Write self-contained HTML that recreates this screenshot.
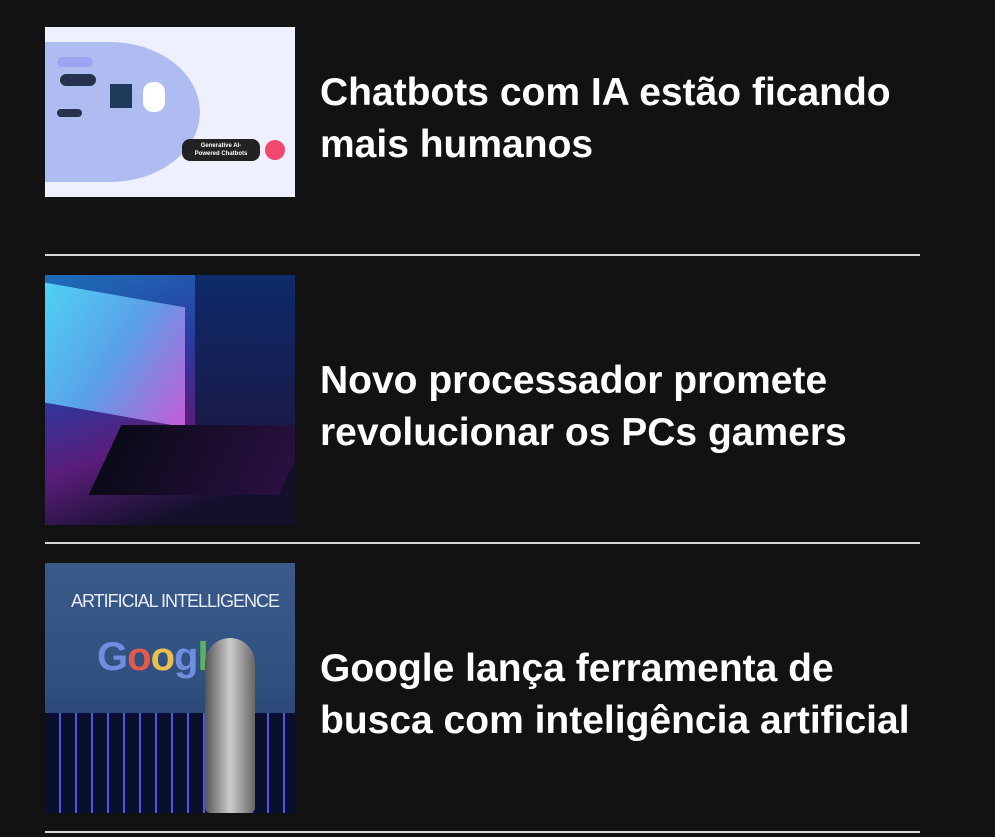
<!DOCTYPE html>
<html><head><meta charset="utf-8"><style>
html,body{margin:0;padding:0;background:#121212;width:995px;height:837px;overflow:hidden;font-family:"Liberation Sans",sans-serif}
.item{position:absolute;left:45px;width:875px}
.img{position:absolute;left:0;width:250px;overflow:hidden}
.t{position:absolute;left:275px;color:#fff;font-weight:bold;font-size:39px;line-height:52px;white-space:nowrap}
.hr{position:absolute;left:45px;width:875px;height:2px;background:#d8d8d8}
</style></head><body>
<div class="item" style="top:27px">
 <div class="img" style="height:170px;background:#eef1fd">
  <div style="position:absolute;left:-60px;top:15px;width:215px;height:140px;background:#aebcf2;border-radius:0 90px 90px 0/0 70px 70px 0"></div>
  <div style="position:absolute;left:12px;top:30px;width:36px;height:10px;background:#9ea5f0;border-radius:5px"></div>
  <div style="position:absolute;left:15px;top:47px;width:36px;height:12px;background:#26324f;border-radius:6px"></div>
  <div style="position:absolute;left:12px;top:82px;width:25px;height:8px;background:#26324f;border-radius:4px"></div>
  <div style="position:absolute;left:65px;top:57px;width:22px;height:24px;background:#1f3b5c"></div>
  <div style="position:absolute;left:98px;top:55px;width:22px;height:30px;background:#fff;border-radius:10px"></div>
  <div style="position:absolute;left:137px;top:112px;width:78px;height:22px;background:#222;border-radius:8px;color:#fff;font-size:6px;line-height:8px;text-align:center;padding-top:3px;box-sizing:border-box;font-weight:bold">Generative AI-<br>Powered Chatbots</div>
  <div style="position:absolute;left:220px;top:113px;width:20px;height:20px;background:#ef4a6d;border-radius:50%"></div>
 </div>
 <div class="t" style="top:40px">Chatbots com IA estão ficando<br>mais humanos</div>
</div>
<div class="hr" style="top:254px"></div>
<div class="item" style="top:275px">
 <div class="img" style="height:250px;background:linear-gradient(160deg,#1c6fb8 0%,#2a3aa0 35%,#5a1d7a 60%,#12102a 85%)">
  <div style="position:absolute;left:0;top:20px;width:140px;height:120px;background:linear-gradient(120deg,#4fd2f5,#5aa0e8 50%,#c65bd6);transform:skewY(10deg)"></div>
  <div style="position:absolute;left:60px;top:150px;width:190px;height:70px;background:linear-gradient(90deg,#0a0a18,#2a1040);transform:skewX(-25deg)"></div>
  <div style="position:absolute;left:150px;top:0;width:100px;height:150px;background:linear-gradient(180deg,#0d2a6a,#1a1a4a)"></div>
 </div>
 <div class="t" style="top:80px">Novo processador promete<br>revolucionar os PCs gamers</div>
</div>
<div class="hr" style="top:542px"></div>
<div class="item" style="top:563px">
 <div class="img" style="height:250px;background:linear-gradient(180deg,#3b5a8a 0%,#2f4f7f 50%,#1a2a5a 100%)">
  <div style="position:absolute;left:26px;top:28px;color:#e8eef8;font-size:18px;white-space:nowrap;letter-spacing:-1px">ARTIFICIAL INTELLIGENCE</div>
  <div style="position:absolute;left:52px;top:72px;font-size:40px;font-weight:bold;color:#6e8fe0;letter-spacing:-1px">G<span style="color:#e25a4a">o</span><span style="color:#e8c04a">o</span>g<span style="color:#5fb060">l</span><span style="color:#e25a4a">e</span></div>
  <div style="position:absolute;left:0;top:150px;width:250px;height:100px;background:repeating-linear-gradient(90deg,#0a0f30 0 14px,#4a5ad8 14px 16px)"></div>
  <div style="position:absolute;left:160px;top:75px;width:50px;height:175px;background:linear-gradient(90deg,#555,#ccc,#666);border-radius:25px 25px 5px 5px"></div>
 </div>
 <div class="t" style="top:80px">Google lança ferramenta de<br>busca com inteligência artificial</div>
</div>
<div class="hr" style="top:831px"></div>
</body></html>
